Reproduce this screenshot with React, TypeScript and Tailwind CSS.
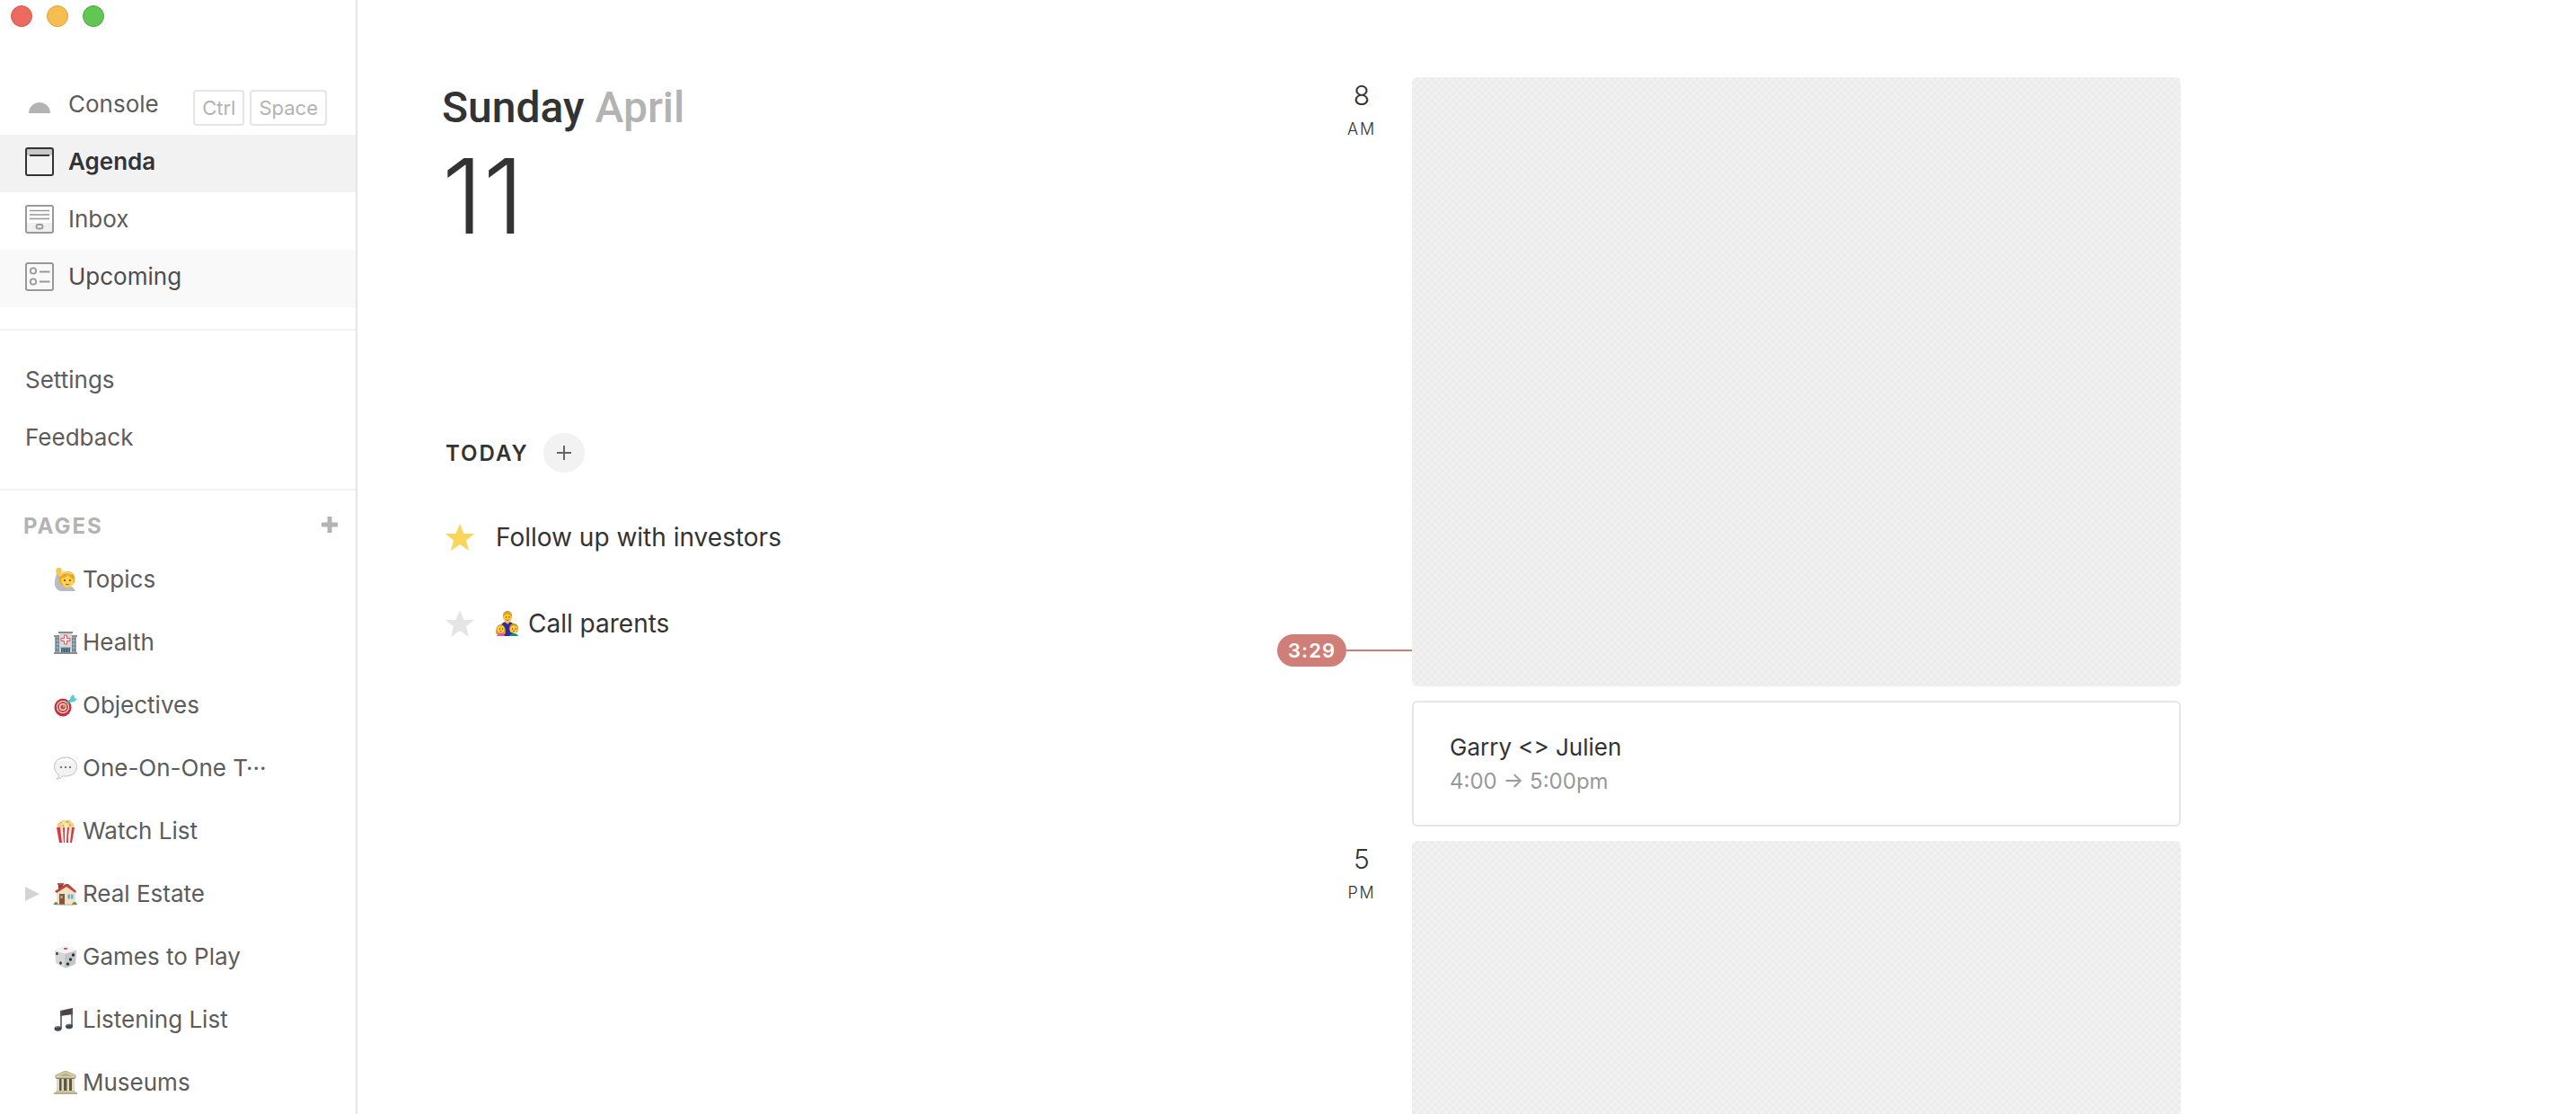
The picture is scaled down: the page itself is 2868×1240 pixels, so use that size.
import type { ReactNode } from "react";

interface NavItem {
	label: string;
	icon: ReactNode;
	className: string;
	keys?: string[];
}

interface Page {
	label: string;
	icon: ReactNode;
	hasChildren?: boolean;
}

const Emoji = ({ children }: { children: ReactNode }) => (
	<svg viewBox="0 0 26 26" className="size-[26px] shrink-0" aria-hidden="true">
		{children}
	</svg>
);

const ConsoleIcon = () => (
	<svg viewBox="0 0 32 32" className="size-8" aria-hidden="true">
		<path d="M4 26a12 12 0 0 1 24 0z" fill="#b3b3b3" />
	</svg>
);

const AgendaIcon = () => (
	<svg viewBox="0 0 32 32" className="size-8" aria-hidden="true">
		<path d="M2 2h28v7H2z" fill="#c8c8c8" />
		<rect x="1" y="1" width="30" height="30" rx="2" fill="none" stroke="#333" strokeWidth="2" />
		<path d="M5 9h22" stroke="#333" strokeWidth="2" />
	</svg>
);

const InboxIcon = () => (
	<svg viewBox="0 0 32 32" className="size-8" aria-hidden="true">
		<path d="M2 20h28v10H2z" fill="#f0f0f0" />
		<rect x="1" y="1" width="30" height="30" rx="2" fill="none" stroke="#999" strokeWidth="2" />
		<path d="M5 6.5h22M5 11h22M5 15.5h22" stroke="#999" strokeWidth="1.7" />
		<rect x="12.5" y="22" width="7" height="4.5" rx="2" fill="none" stroke="#999" strokeWidth="1.8" />
	</svg>
);

const UpcomingIcon = () => (
	<svg viewBox="0 0 32 32" className="size-8" fill="none" stroke="#999" aria-hidden="true">
		<rect x="1" y="1" width="30" height="30" rx="2" strokeWidth="2" />
		<circle cx="9" cy="9.5" r="3.2" strokeWidth="1.8" />
		<circle cx="9" cy="21.5" r="3.2" strokeWidth="1.8" />
		<path d="M16 10.5h11.5M16 21.5h11.5" strokeWidth="2" />
	</svg>
);

const PersonEmoji = () => (
	<Emoji>
		<path d="M3 7C1 12 0 18 2 22c2 4 6 4 9 4h13c-1-4-5-6-11-6-4 0-6-4-7-13z" fill="#b9bcc2" />
		<path d="M3 8C2 4 2 1 4 0c3-1 5 1 5 4L7 8z" fill="#f9c74b" />
		<path d="M6 15C5 7 9 4 15 4c7 0 9 5 8 12l-3 4H9z" fill="#e8a72c" />
		<path d="M8 12c3-1 6-2 8-4 2 3 4 4 6 5 0 6-3 9-7 9s-7-4-7-10z" fill="#ffd14d" />
		<path d="M7 9c2-4 8-5 13-2" fill="none" stroke="#f9d36c" strokeWidth="2" />
		<circle cx="12" cy="14" r="1" fill="#563b22" />
		<circle cx="18" cy="14" r="1" fill="#563b22" />
		<path d="M13 18c1 1 3 1 4 0" fill="none" stroke="#98562b" />
	</Emoji>
);

const HospitalEmoji = () => (
	<Emoji>
		<path d="M1 6h6v19H1zM19 6h6v19h-6z" fill="#a5a39b" />
		<path d="M2 8h4v15H2zM20 8h4v15h-4z" fill="#507f9c" />
		<path d="M2 11h4M2 15h4M2 19h4M20 11h4M20 15h4M20 19h4M4 8v15M22 8v15" stroke="#b5b5ad" />
		<path d="M6 2h14v23H6z" fill="#d7d8d8" />
		<path d="M5 1h16v2H5zM0 5h6v2H0zM20 5h6v2h-6z" fill="#8d8e8c" />
		<path d="M11.5 5h3v3.5H18v3h-3.5V15h-3v-3.5H8v-3h3.5z" fill="#f4e9e9" stroke="#e35561" />
		<path d="M8 19h10v6H8z" fill="#2c658b" />
		<path d="M7 19h12M10 20v5M13 20v5M16 20v5" stroke="#8f8c83" />
		<path d="M0 25h26" stroke="#8c8d88" strokeWidth="2" />
	</Emoji>
);

const TargetEmoji = () => (
	<Emoji>
		<ellipse cx="10" cy="15.5" rx="9.5" ry="10" fill="#c8323b" />
		<circle cx="10" cy="15" r="7" fill="#fff" />
		<circle cx="10" cy="15" r="6" fill="#cf3943" />
		<circle cx="10" cy="15" r="4" fill="#fff" />
		<circle cx="10" cy="15" r="2.8" fill="#cf3943" />
		<path d="m10 15 8-7" stroke="#d1a73f" strokeWidth="2" />
		<path d="m13 12 7-6" stroke="#44aebb" strokeWidth="2" />
		<path d="m18 7 1-4 3-2 1 4 3 1-3 3-5 1z" fill="#5ccbd4" />
	</Emoji>
);

const SpeechEmoji = () => (
	<Emoji>
		<path
			d="M13 1c7 0 12.5 4 12.5 10.500S20 22 13 22c-2 0-3 0-4 0-1 2-3 3-6 3 2-1 3-3 2-5-3-2-4.500-5-4.500-8.500C.5 5 6 1 13 1z"
			fill="#f2f2f2"
			stroke="#c1c1c1"
		/>
		<path d="M4 6c5-5 13-5 18 0-5-2-12-2-18 0z" fill="#fff" />
		<circle cx="8" cy="12" r="1.1" fill="#555" />
		<circle cx="13" cy="12" r="1.1" fill="#555" />
		<circle cx="18" cy="12" r="1.1" fill="#555" />
	</Emoji>
);

const PopcornEmoji = () => (
	<Emoji>
		<circle cx="7" cy="7" r="3.5" fill="#ecd07e" />
		<circle cx="11" cy="4" r="3.5" fill="#f5df96" />
		<circle cx="16" cy="4" r="3.2" fill="#e8c970" />
		<circle cx="19" cy="7" r="3.5" fill="#efd487" />
		<circle cx="13" cy="7" r="3.5" fill="#f9e8ae" />
		<path d="M3 9h20l-3 17H6z" fill="#f4ebe7" />
		<path d="M3 9h4l2 17H6zM10 9h2v17h-1zM15 9h2l-1 10v7h-2zM20 9h3l-3 17h-2z" fill="#d43b43" />
		<path d="m7 3 2 1m5-2 1 2m2 2 2 1m-9-1 1 2" stroke="#bd8b37" />
	</Emoji>
);

const HouseEmoji = () => (
	<Emoji>
		<path d="M5 1h5v8H5z" fill="#993c34" />
		<path d="M3 10 14 3l10 7v14H3z" fill="#f5e2bd" />
		<path d="m1 10 12-8h3l9 8-1 2-10-7L3 12z" fill="#c14245" />
		<path d="M4 1h7v2H4z" fill="#b9564c" />
		<path d="M6 13h6v12H6z" fill="#8d5138" />
		<path d="M7 15h3v3H7z" fill="#68a9d7" />
		<path d="M15 13h7v6h-7z" fill="#5faee4" stroke="#eee6d6" />
		<path d="M18.5 13v6" stroke="#cde8fa" />
		<path d="M0 25c0-4 4-4 5 0zM20 25c1-4 5-4 6 0z" fill="#5d9440" />
		<path d="M3 25h20" stroke="#aaa28b" />
	</Emoji>
);

const DieEmoji = () => (
	<Emoji>
		<path d="m1 6 11-5q1-.5 2 0l11 5-1 14q0 1-2 2l-7 3q-2 1-4 0l-7-4q-2-1-2-2z" fill="#d5d6d8" />
		<path d="M1 6q0-1 2-2l9-3q1-.5 2 0l9 3q2 1 2 2l-12 4z" fill="#f3f3f4" />
		<path d="m12 10 13-4-1 14q0 1-2 2l-8 3q-1 .5-2 0z" fill="#c4c5c8" />
		<ellipse cx="13" cy="4" rx="2.3" ry="1.1" fill="#db3e44" />
		<ellipse cx="3.5" cy="9.5" rx="1.2" ry="1.8" fill="#2f2f31" />
		<ellipse cx="7.5" cy="20" rx="1.3" ry="1.8" fill="#2f2f31" />
		<circle cx="21.5" cy="11" r="1.7" fill="#2f2f31" />
		<circle cx="18.5" cy="16" r="1.7" fill="#2f2f31" />
		<circle cx="15.5" cy="21" r="1.7" fill="#2f2f31" />
	</Emoji>
);

const MusicEmoji = () => (
	<Emoji>
		<path d="M7 3 21 0v7L7 9z" fill="#4b4245" />
		<path d="M8 3v20M20 1v19" stroke="#4d5962" strokeWidth="1.6" />
		<ellipse cx="4.5" cy="23" rx="4" ry="2.8" fill="#3d4851" />
		<ellipse cx="17" cy="20.5" rx="4" ry="2.8" fill="#3d4851" />
		<path d="M2 22q2-2 4-1M14.5 19.5q2-2 4-1" fill="none" stroke="#84919b" />
	</Emoji>
);

const MuseumEmoji = () => (
	<Emoji>
		<path d="M3 8h20v15H3z" fill="#5d5747" />
		<path d="M13 0 24 5v3H2V5z" fill="#d9d2b2" stroke="#aaa17b" />
		<path d="m5 6 8-4 8 4z" fill="#bab08b" />
		<path d="M3 9h3v13H3zM8.5 9H11v13H8.5zM14.5 9H17v13h-2.5zM20 9h3v13h-3z" fill="#e0d9ba" />
		<path d="M2 22h22v2H2z" fill="#cfc7a3" />
		<path d="M0 24h26v2H0z" fill="#b8ae88" />
	</Emoji>
);

const FamilyEmoji = () => (
	<svg viewBox="0 0 26 28" className="h-7 w-[26px] shrink-0" aria-hidden="true">
		<path d="M6 16q1-4 7-4t7 4v12H6z" fill="#2c2ba4" />
		<path d="m10 12 3 3 3-3z" fill="#f0b82d" />
		<path d="M8 6c0-8 10-8 10 0l-1 4H9z" fill="#c88d22" />
		<ellipse cx="13" cy="7.5" rx="4.6" ry="5.2" fill="#fcc93a" />
		<path d="M8 5c1-6 9-6 10 0-4 0-5-2-6-2-1 2-2 2-4 2z" fill="#dda02c" />
		<path d="M0 24c0-12 11-12 11 0l-1 2H1z" fill="#d79a27" />
		<circle cx="5.5" cy="20.5" r="4" fill="#ffcc3e" />
		<path d="M1 28q1-3 4.5-3t4.5 3z" fill="#e255b5" />
		<path d="M15 20c0-8 10-8 10 0l-1 4h-8z" fill="#cd922a" />
		<circle cx="20" cy="20.5" r="4.2" fill="#ffcc3e" />
		<path d="M15 28q1-3 5-3t5 3z" fill="#168b7c" />
		<path d="M11 7h1M14.5 7h1M4 20h1M7 20h1M18 20h1M21.5 20h1" stroke="#57411d" strokeWidth="1.3" />
		<path d="M11.5 10q1.5 1 3 0M4.5 22.5h2M19 22.5h2" fill="none" stroke="#a45b28" />
	</svg>
);

const StarIcon = ({ className }: { className: string }) => (
	<svg viewBox="0 0 32 30" className={className} aria-hidden="true">
		<path d="m16 0 4.5 11H32l-9 7.5L26 30l-10-7-10 7 3-11.5L0 11h11.5z" fill="currentColor" />
	</svg>
);

const navItems: NavItem[] = [
	{
		label: "Console",
		icon: <ConsoleIcon />,
		className: "text-[#5c5c5c]",
		keys: ["Ctrl", "Space"],
	},
	{
		label: "Agenda",
		icon: <AgendaIcon />,
		className: "bg-[#f2f2f2] font-semibold text-[#333333]",
	},
	{ label: "Inbox", icon: <InboxIcon />, className: "text-[#5c5c5c]" },
	{
		label: "Upcoming",
		icon: <UpcomingIcon />,
		className: "bg-[#f9f9f9] text-[#4d4d4d]",
	},
];

const pages: Page[] = [
	{ label: "Topics", icon: <PersonEmoji /> },
	{ label: "Health", icon: <HospitalEmoji /> },
	{ label: "Objectives", icon: <TargetEmoji /> },
	{ label: "One-On-One T···", icon: <SpeechEmoji /> },
	{ label: "Watch List", icon: <PopcornEmoji /> },
	{ label: "Real Estate", icon: <HouseEmoji />, hasChildren: true },
	{ label: "Games to Play", icon: <DieEmoji /> },
	{ label: "Listening List", icon: <MusicEmoji /> },
	{ label: "Museums", icon: <MuseumEmoji /> },
];

const Sidebar = () => (
	<aside className="flex w-[398px] shrink-0 flex-col border-r-2 border-[#e5e5e5] text-[26px] leading-8 text-[#5c5c5c]">
		<div className="flex h-[86px] gap-4 px-3 pt-1.5">
			<span className="size-6 rounded-full border border-[#d9554c] bg-[#ed6a5f]" />
			<span className="size-6 rounded-full border border-[#dca13b] bg-[#f6be50]" />
			<span className="size-6 rounded-full border border-[#4aa73c] bg-[#62c655]" />
		</div>
		<nav>
			{navItems.map((item) => (
				<a
					key={item.label}
					href="#"
					className={`flex h-16 items-center gap-4 pr-8 pb-1 pl-7 ${item.className}`}
				>
					{item.icon}
					{item.label}
					{item.keys && (
						<span className="ml-auto flex gap-1.5 pt-2">
							{item.keys.map((key) => (
								<kbd
									key={key}
									className="rounded border-2 border-[#e5e5e5] px-2 font-[Inter,sans-serif] text-[22px] leading-9 text-[#b3b3b3]"
								>
									{key}
								</kbd>
							))}
						</span>
					)}
				</a>
			))}
		</nav>
		<div className="mt-6 border-y-2 border-[#f2f2f2] py-6">
			<a href="#" className="flex h-16 items-center px-7 pb-0.5">
				Settings
			</a>
			<a href="#" className="flex h-16 items-center px-7 pb-0.5">
				Feedback
			</a>
		</div>
		<div className="flex items-center justify-between pt-6 pr-5 pl-[26px]">
			<h2 className="text-2xl font-bold tracking-[2px] text-[#b3b3b3]">PAGES</h2>
			<button type="button" aria-label="Add page" className="flex pb-1">
				<svg viewBox="0 0 18 18" className="size-[18px]" aria-hidden="true">
					<path d="M9 0v18M0 9h18" stroke="#b3b3b3" strokeWidth="5" />
				</svg>
			</button>
		</div>
		<ul className="pt-2">
			{pages.map((page) => (
				<li key={page.label} className="flex h-[70px] items-center pl-7">
					<span className="w-8">
						{page.hasChildren && (
							<svg viewBox="0 0 16 16" className="size-4" aria-hidden="true">
								<path d="m0 0 16 8-16 8z" fill="#d4d4d4" />
							</svg>
						)}
					</span>
					<a href="#" className="flex items-center gap-1.5">
						{page.icon}
						{page.label}
					</a>
				</li>
			))}
		</ul>
	</aside>
);

const Today = () => (
	<section className="w-[992px] shrink-0 pt-[86px] text-[#333333]">
		<h1 className="font-light">
			<span className="block font-[Roboto,sans-serif] text-5xl leading-[68px] font-medium">
				Sunday <span className="text-[#b3b3b3]">April</span>
			</span>
			<span className="block text-[116px] leading-[128px]">11</span>
		</h1>
		<div className="mt-[200px] flex items-center gap-4 pl-1">
			<h2 className="pt-0.5 text-2xl font-semibold tracking-[2px]">TODAY</h2>
			<button
				type="button"
				aria-label="Add task"
				className="flex h-11 w-[46px] items-center justify-center rounded-full bg-[#f2f2f2]"
			>
				<svg viewBox="0 0 16 16" className="size-4" aria-hidden="true">
					<path d="M8 0v16M0 8h16" stroke="#666" strokeWidth="2" />
				</svg>
			</button>
		</div>
		<ul className="pt-6 pl-1 text-[28px] leading-8">
			<li className="flex h-24 items-center gap-6">
				<button type="button" aria-label="Remove star">
					<StarIcon className="h-[30px] w-8 text-[#fad55c]" />
				</button>
				Follow up with investors
			</li>
			<li className="flex h-24 items-center gap-6">
				<button type="button" aria-label="Add star">
					<StarIcon className="h-[30px] w-8 text-[#e5e5e5]" />
				</button>
				<span className="flex items-center gap-2.5">
					<FamilyEmoji />
					Call parents
				</span>
			</li>
		</ul>
	</section>
);

const Hour = ({ hour, period }: { hour: string; period: string }) => (
	<div className="w-16 pt-0.5 text-center font-light text-[#333333]">
		<p className="text-[30px] leading-9">{hour}</p>
		<p className="text-lg leading-10 tracking-widest">{period}</p>
	</div>
);

const FreeBlock = () => (
	<div className="rounded-md bg-[repeating-conic-gradient(#ececec_0_25%,#f1f1f1_0_50%)] bg-size-[8px_8px]" />
);

const Schedule = () => (
	<section className="relative grid min-w-0 flex-1 grid-cols-[64px_1fr] grid-rows-[678px_140px_480px] gap-x-6 gap-y-4 pt-[86px]">
		<Hour hour="8" period="AM" />
		<FreeBlock />
		<div />
		<article className="flex flex-col justify-center rounded-md border-2 border-[#e5e5e5] px-10">
			<h3 className="text-[26px] leading-10 text-[#333333]">Garry &lt;&gt; Julien</h3>
			<p className="text-2xl leading-9 text-[#999999]">4:00 → 5:00pm</p>
		</article>
		<Hour hour="5" period="PM" />
		<FreeBlock />
		<div className="absolute top-[706px] -left-[62px] flex w-[150px] items-center">
			<span className="rounded-full bg-[#cf7f77] px-3 text-[22px] leading-9 font-semibold tracking-wider text-white">
				3:29
			</span>
			<span className="h-0.5 flex-1 bg-[#cf7f77]" />
		</div>
	</section>
);

const App = () => (
	<div className="flex h-screen overflow-hidden bg-white font-[Inter,sans-serif]">
		<Sidebar />
		<main className="flex flex-1 pr-[440px] pl-[94px]">
			<Today />
			<Schedule />
		</main>
	</div>
);

export default App;
